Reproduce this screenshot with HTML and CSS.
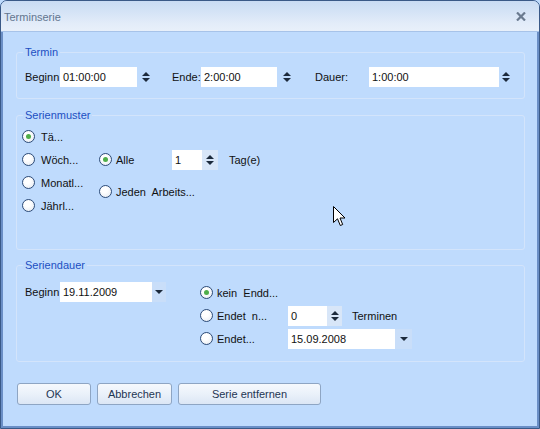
FILE: index.html
```html
<!DOCTYPE html>
<html lang="de">
<head>
<meta charset="utf-8">
<title>Terminserie</title>
<link rel="stylesheet" href="styles.css">
</head>
<body>
<div class="window">
  <div class="titlebar">
    <span class="title">Terminserie</span>
    <svg class="close" width="10" height="9" viewBox="0 0 10 9"><path d="M1 0.5 L9 8.5 M9 0.5 L1 8.5" stroke="#6a7a8f" stroke-width="2.2" fill="none"/></svg>
  </div>
  <div class="client">
    <fieldset class="group g-termin">
      <legend>Termin</legend>
      <div class="row">
        <span class="lbl w-beginn">Beginn</span>
        <span class="field w-77">01:00:00</span>
        <span class="spin ml-3"><i class="up"></i><i class="dn"></i></span>
        <span class="lbl w-ende">Ende:</span>
        <span class="field w-76">2:00:00</span>
        <span class="spin ml-4"><i class="up"></i><i class="dn"></i></span>
        <span class="lbl w-dauer">Dauer:</span>
        <span class="field w-130">1:00:00</span>
        <span class="spin ml-1"><i class="up"></i><i class="dn"></i></span>
      </div>
    </fieldset>

    <fieldset class="group g-muster">
      <legend>Serienmuster</legend>
      <div class="muster">
        <div class="col-left">
          <div class="opt"><span class="radio on"></span><span>Tä...</span></div>
          <div class="opt"><span class="radio"></span><span>Wöch...</span></div>
          <div class="opt"><span class="radio"></span><span>Monatl...</span></div>
          <div class="opt"><span class="radio"></span><span>Jährl...</span></div>
        </div>
        <div class="col-mid">
          <div class="opt">
            <span class="w-alle opt"><span class="radio on"></span><span>Alle</span></span>
            <span class="field w-30">1</span>
            <span class="spin attached"><i class="up"></i><i class="dn"></i></span>
            <span class="tag">Tag(e)</span>
          </div>
          <div class="opt jeden"><span class="radio"></span><span>Jeden&nbsp; Arbeits...</span></div>
        </div>
      </div>
    </fieldset>

    <fieldset class="group g-dauer">
      <legend>Seriendauer</legend>
      <div class="dauer">
        <div class="col-start">
          <div class="row">
            <span class="lbl w-beginn">Beginn</span>
            <span class="field w-92">19.11.2009</span>
            <span class="drop"><i class="dn"></i></span>
          </div>
        </div>
        <div class="col-end">
          <div class="opt"><span class="radio on"></span><span>kein&nbsp; Endd...</span></div>
          <div class="opt">
            <span class="w-endopt opt"><span class="radio"></span><span>Endet&nbsp; n...</span></span>
            <span class="field w-39">0</span>
            <span class="spin attached w-15"><i class="up"></i><i class="dn"></i></span>
            <span class="tag2">Terminen</span>
          </div>
          <div class="opt">
            <span class="w-endopt opt"><span class="radio"></span><span>Endet...</span></span>
            <span class="field w-107">15.09.2008</span>
            <span class="drop w-17"><i class="dn"></i></span>
          </div>
        </div>
      </div>
    </fieldset>

    <div class="buttons">
      <button class="btn w-74">OK</button>
      <button class="btn w-75">Abbrechen</button>
      <button class="btn w-143">Serie entfernen</button>
    </div>
  </div>
  <svg class="cursor" width="14" height="22" viewBox="0 0 14 22"><path d="M0.5 0.5 L0.5 16.5 L4.5 12.8 L7.3 19.5 L9.7 18.5 L7 12 L12 12 Z" fill="#fff" stroke="#000" stroke-width="1" stroke-linejoin="miter"/></svg>
</div>
</body>
</html>
```

FILE: styles.css
```css
html, body {
  margin: 0;
  padding: 0;
  background: #bfdbfd;
}
body {
  font-family: "Liberation Sans", Arial, sans-serif;
  font-size: 11px;
  color: #111;
}
.window {
  position: relative;
  width: 540px;
  height: 429px;
  box-sizing: border-box;
  border: 1px solid #3a5987;
  border-radius: 7px 7px 0 0;
  overflow: hidden;
  display: flex;
  flex-direction: column;
  background: #bfdbfd;
}
.titlebar {
  flex: none;
  height: 30px;
  border-bottom: 1px solid #a7c3e9;
  display: flex;
  align-items: center;
  justify-content: space-between;
  padding: 0 13px 0 3px;
  background: linear-gradient(#c9dbf3 0%, #d4e3f6 35%, #e3ecf9 75%, #e8f0fa 100%);
}
.title {
  color: #62758f;
  font-size: 11px;
  padding-top: 1px;
}
.close {
  display: block;
  margin-top: 1px;
}
.client {
  flex: 1;
  border: solid #6b8fc6;
  border-width: 0 2px 2px 2px;
  padding: 14px 12px 0 13px;
  display: flex;
  flex-direction: column;
}
.group {
  margin: 0;
  padding: 0 8px 11px 8px;
  border: 1px solid #d3e4fb;
  border-radius: 3px;
  min-width: 0;
}
.group legend {
  padding: 0 2px;
  margin-left: -2px;
  line-height: 13px;
  color: #1d4fc2;
}
.g-termin .row { margin-top: 8px; }
.g-muster { margin-top: 10px; padding-bottom: 32px; }
.g-dauer { margin-top: 9px; padding-bottom: 11px; }

.row {
  display: flex;
  align-items: center;
  height: 20px;
}
.lbl { flex: none; }
.w-beginn { width: 35px; }
.w-ende { width: 29px; margin-left: 20px; }
.w-dauer { width: 54px; margin-left: 22px; }

.field {
  flex: none;
  height: 20px;
  line-height: 20px;
  background: #fff;
  padding-left: 3px;
  box-sizing: border-box;
  white-space: nowrap;
}
.w-77 { width: 77px; }
.w-76 { width: 76px; }
.w-130 { width: 130px; }
.w-30 { width: 30px; }
.w-92 { width: 92px; }
.w-39 { width: 39px; }
.w-107 { width: 107px; }

.ml-1 { margin-left: 1px; }
.ml-3 { margin-left: 3px; }
.ml-4 { margin-left: 4px; }

.spin {
  flex: none;
  width: 12px;
  height: 20px;
  display: flex;
  flex-direction: column;
  align-items: center;
  justify-content: center;
  gap: 2px;
}
.spin.attached {
  width: 16px;
  background: #d8e6f8;
}
.spin.w-15 { width: 15px; }
.up, .dn {
  display: block;
  width: 0;
  height: 0;
  border-left: 4px solid transparent;
  border-right: 4px solid transparent;
}
.up { border-bottom: 4px solid #1c2a3c; }
.dn { border-top: 4px solid #1c2a3c; }

.drop {
  flex: none;
  width: 14px;
  height: 20px;
  display: flex;
  align-items: center;
  justify-content: center;
  background: #c9def9;
}
.drop.w-17 { width: 17px; }

.radio {
  flex: none;
  position: relative;
  width: 13px;
  height: 13px;
  box-sizing: border-box;
  border-radius: 50%;
  border: 1px solid #2d4b77;
  background: radial-gradient(circle at 40% 35%, #ffffff 30%, #e2e8f0 100%);
}
.radio.on::after {
  content: "";
  position: absolute;
  left: 3px;
  top: 3px;
  width: 5px;
  height: 5px;
  border-radius: 50%;
  background: #4fae4a;
}

.muster {
  display: flex;
  margin-top: 3px;
}
.col-left {
  width: 77px;
  margin-left: -3px;
  display: flex;
  flex-direction: column;
}
.col-left .opt { height: 23px; gap: 6px; }
.opt {
  display: flex;
  align-items: center;
  gap: 4px;
  white-space: nowrap;
}
.col-mid {
  display: flex;
  flex-direction: column;
  padding-top: 23px;
}
.col-mid > .opt { height: 23px; gap: 0; }
.w-alle { width: 73px; gap: 4px; }
.jeden { margin-top: 9px; gap: 4px !important; }
.tag { margin-left: 11px; }

.dauer {
  display: flex;
  margin-top: 9px;
}
.col-start {
  width: 175px;
  padding-top: 1px;
}
.col-end {
  display: flex;
  flex-direction: column;
}
.col-end > .opt { height: 23px; gap: 0; }
.col-end > .opt:first-child { gap: 4px; }
.w-endopt { width: 88px; gap: 4px; }
.tag2 { margin-left: 10px; }

.buttons {
  display: flex;
  gap: 6px;
  margin-top: 21px;
  margin-left: 1px;
}
.btn {
  height: 22px;
  padding: 0;
  border: 1px solid #8ea5c3;
  border-radius: 3px;
  background: linear-gradient(#f6f9fd 0%, #eaf1fa 50%, #dbe6f5 100%);
  font-family: "Liberation Sans", Arial, sans-serif;
  font-size: 11px;
  color: #1e3553;
}
.w-74 { width: 74px; }
.w-75 { width: 75px; }
.w-143 { width: 143px; }

.cursor {
  position: absolute;
  left: 332px;
  top: 205px;
}
```
